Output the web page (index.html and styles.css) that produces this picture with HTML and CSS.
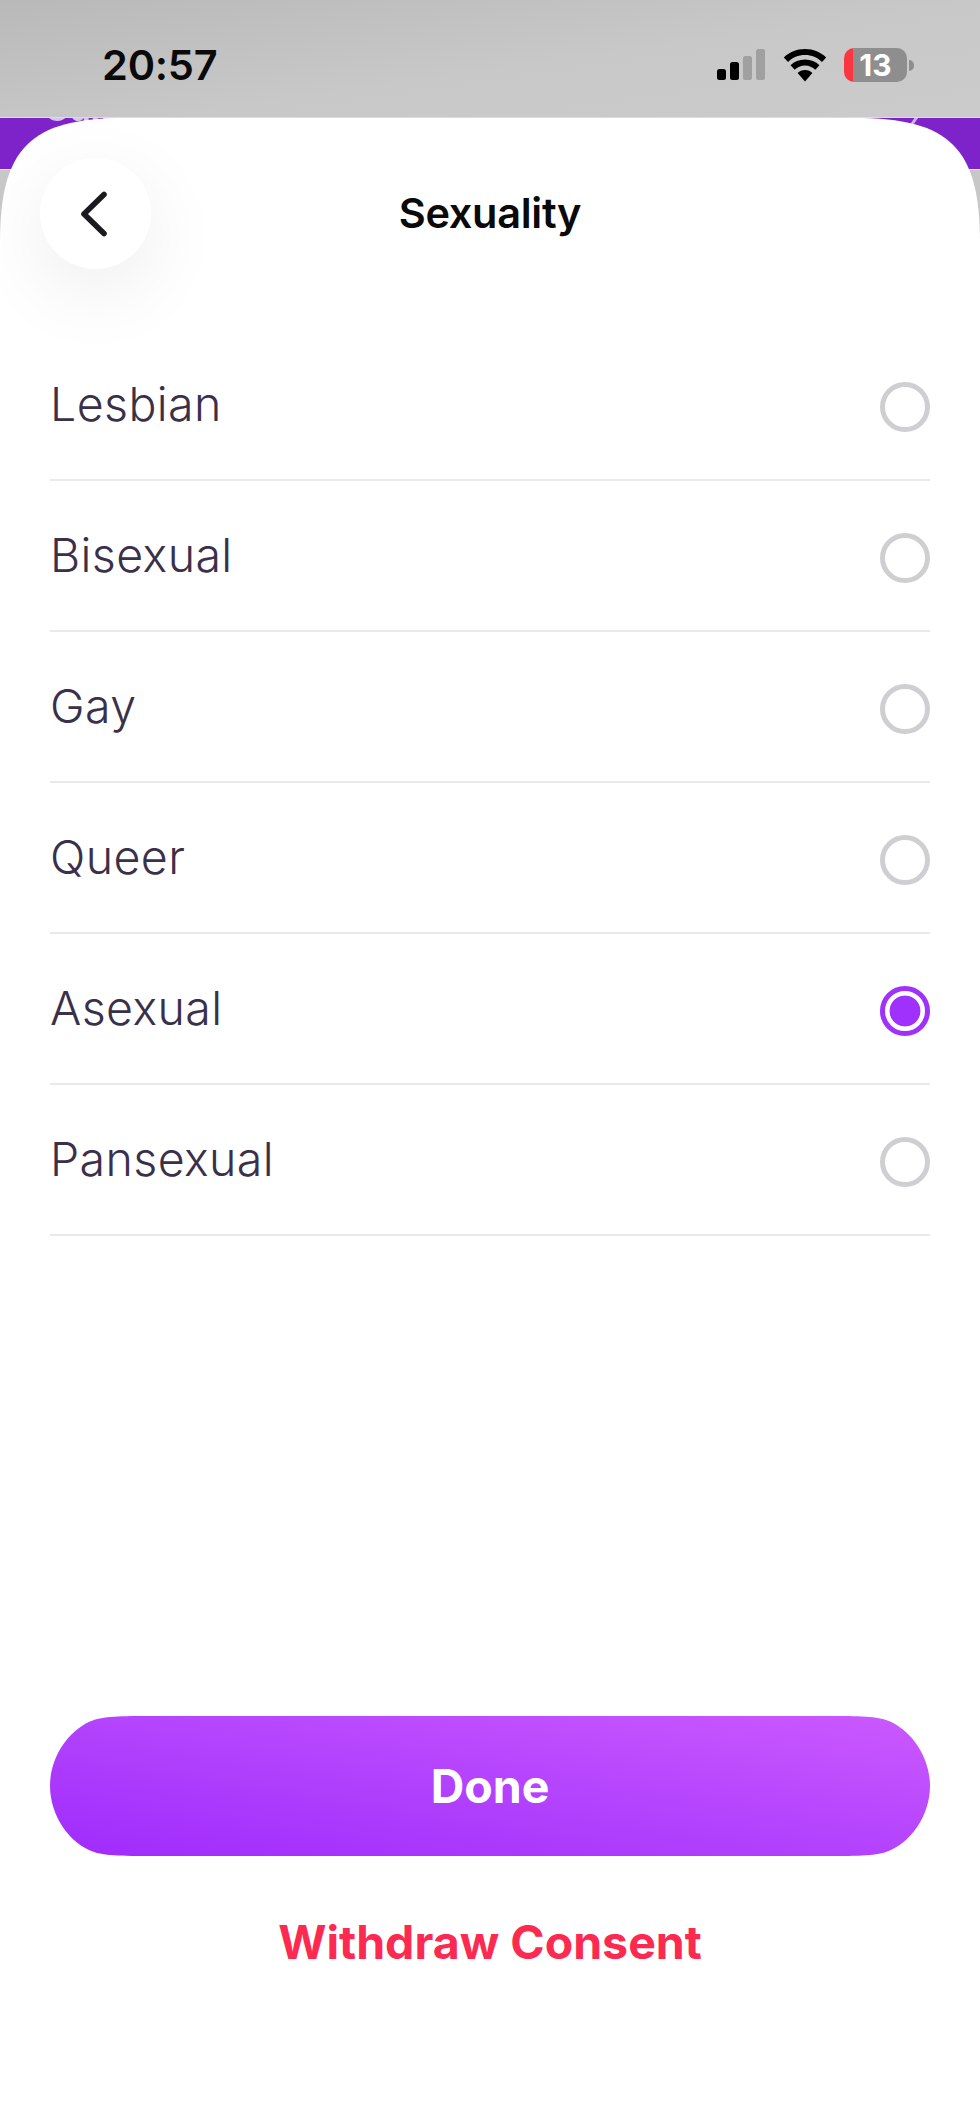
FILE: index.html
```html
<!DOCTYPE html>
<html lang="en">
<head>
<meta charset="utf-8">
<title>Sexuality</title>
<link rel="stylesheet" href="styles.css">
</head>
<body>
<div class="app">
  <header class="status">
    <span class="time">20:57</span>
    <div class="status-icons">
      <svg class="signal" width="50" height="32" viewBox="0 0 50 32">
        <rect x="1" y="20" width="9" height="11" rx="2.5" fill="#000"/>
        <rect x="14" y="13" width="9" height="18" rx="2.5" fill="#000"/>
        <rect x="27" y="7" width="9" height="24" rx="2.5" fill="#a0a0a0"/>
        <rect x="40" y="0" width="9" height="31" rx="2.5" fill="#a0a0a0"/>
      </svg>
      <svg class="wifi" width="44" height="33" viewBox="0 0 44 33">
        <path d="M22 0C13.600 0 6.200 3.200 .8 8.400l4.200 4.500C9.400 8.700 15.400 6 22 6s12.600 2.700 17 6.900l4.200-4.500C37.800 3.200 30.400 0 22 0z" fill="#000"/>
        <path d="M22 10.500c-5.700 0-10.800 2.200-14.500 5.800l4.200 4.500c2.700-2.600 6.300-4.200 10.300-4.200s7.600 1.600 10.300 4.200l4.200-4.500c-3.700-3.600-8.800-5.800-14.500-5.800z" fill="#000"/>
        <path d="M22 21c-2.900 0-5.500 1.100-7.400 3L22 32.500l7.400-8.500c-1.900-1.900-4.500-3-7.400-3z" fill="#000"/>
      </svg>
      <div class="battery"><span class="battery-level">13</span></div>
      <span class="battery-tip"></span>
    </div>
  </header>

  <div class="stage">
    <div class="backdrop-label">Guid</div>
    <span class="backdrop-chevron"></span>
    <main class="sheet">
      <div class="sheet-head">
        <button class="back" type="button" aria-label="Back">
          <svg width="30" height="46" viewBox="0 0 30 46" fill="none">
            <path d="M25 3.500 5 23l20 19.500" stroke="#1b1b1f" stroke-width="5.600" stroke-linecap="round" stroke-linejoin="round"/>
          </svg>
        </button>
        <h1 class="title">Sexuality</h1>
      </div>

      <ul class="options">
        <li class="option"><span>Lesbian</span><i class="radio"></i></li>
        <li class="option"><span>Bisexual</span><i class="radio"></i></li>
        <li class="option"><span>Gay</span><i class="radio"></i></li>
        <li class="option"><span>Queer</span><i class="radio"></i></li>
        <li class="option"><span>Asexual</span><i class="radio radio-on"></i></li>
        <li class="option"><span>Pansexual</span><i class="radio"></i></li>
      </ul>

      <div class="actions">
        <button class="done" type="button">Done</button>
        <button class="withdraw" type="button">Withdraw Consent</button>
      </div>
    </main>
  </div>
</div>
</body>
</html>
```
FILE: styles.css
```css
* { box-sizing: border-box; }
html, body { margin: 0; padding: 0; background: #fff; }
.app { width: 980px; height: 2121px; display: flex; flex-direction: column; overflow: hidden; font-family: "Inter", "Liberation Sans", sans-serif; }

.status { height: 118px; flex: none; display: flex; justify-content: space-between; align-items: flex-start; padding: 0 66px 0 102px; background: linear-gradient(172deg, #b9b9b9 0%, #c8c8c8 55%, #cbcbcb 100%); border-bottom: 1px solid #dcdcdc; }
.time { font-weight: 600; font-size: 41.500px; line-height: 48px; margin-top: 41px; color: #0a0a0a; letter-spacing: -.2px; }
.status-icons { display: flex; align-items: center; margin-top: 48px; height: 34px; }
.signal { display: block; margin-right: 17px; }
.wifi { display: block; margin-right: 17px; }
.battery { width: 63px; height: 34px; border-radius: 10px; background: linear-gradient(90deg, #fb3640 9px, #8e8e8e 9px); display: flex; align-items: center; justify-content: center; }
.battery-level { font-weight: 700; font-size: 30px; line-height: 34px; color: #fff; }
.battery-tip { width: 5px; height: 11px; margin-left: 2px; border-radius: 0 6px 6px 0; background: #8e8e8e; }

.stage { flex: 1; position: relative; background: linear-gradient(#7e22c9 0, #7e22c9 51px, #e4e4e4 51px, #e4e4e4 52px, #c7c7c7 52px); overflow: hidden; }
.backdrop-label { position: absolute; left: 44px; top: -28px; font-size: 34px; line-height: 38px; font-weight: 700; color: #d8c4ee; }
.backdrop-chevron { position: absolute; left: 913px; top: -3px; width: 3px; height: 11px; background: #cdb6e8; transform: rotate(35deg); }

.sheet { position: relative; height: 100%; background: #fff; clip-path: path("M0 2003V125C0 30 30 0 125 0H855C950 0 980 30 980 125V2003Z"); padding: 0 50px; display: flex; flex-direction: column; }
.sheet-head { height: 212px; flex: none; position: relative; display: flex; align-items: center; justify-content: center; padding-bottom: 23px; }
.back { position: absolute; left: -10px; top: 40px; width: 111px; height: 111px; border: 0; padding: 0; border-radius: 50%; background: #fff; display: flex; align-items: center; justify-content: center; box-shadow: 0 22px 80px rgba(0, 0, 0, .075); }
.back svg { display: block; margin-right: 3px; }
.title { margin: 0; font-size: 41.500px; line-height: 48px; font-weight: 600; color: #0a0a0a; letter-spacing: -.3px; }

.options { list-style: none; margin: 0; padding: 0; }
.option { height: 151px; display: flex; align-items: center; justify-content: space-between; border-bottom: 2px solid #e9e9ea; font-size: 46.500px; font-weight: 350; color: #3a3049; letter-spacing: .4px; }
.option span { display: block; margin-top: -1px; }
.radio { display: block; width: 50px; height: 50px; border-radius: 50%; border: 5px solid #cfced3; background: #fff; margin-top: 5px; }
.radio-on { border-color: #a030fb; background: radial-gradient(circle, #a030fb 0, #a030fb 15px, #fff 15.800px); }

.actions { margin-top: auto; padding-bottom: 133px; display: flex; flex-direction: column; align-items: center; }
.done { width: 880px; height: 140px; border: 0; clip-path: path("M110 0C75 0 55 0 44 4C20 12 0 40 0 70C0 100 20 128 44 136C55 140 75 140 110 140H770C805 140 825 140 836 136C860 128 880 100 880 70C880 40 860 12 836 4C825 0 805 0 770 0Z"); background: linear-gradient(to bottom left, #cb59ff 0%, #b343fd 50%, #a02bfc 100%); color: #fff; font-family: inherit; font-weight: 700; font-size: 46.500px; }
.withdraw { margin-top: 40px; height: 92px; border: 0; padding: 0; background: none; color: #fc2a50; font-family: inherit; font-weight: 700; font-size: 46.500px; }
```
